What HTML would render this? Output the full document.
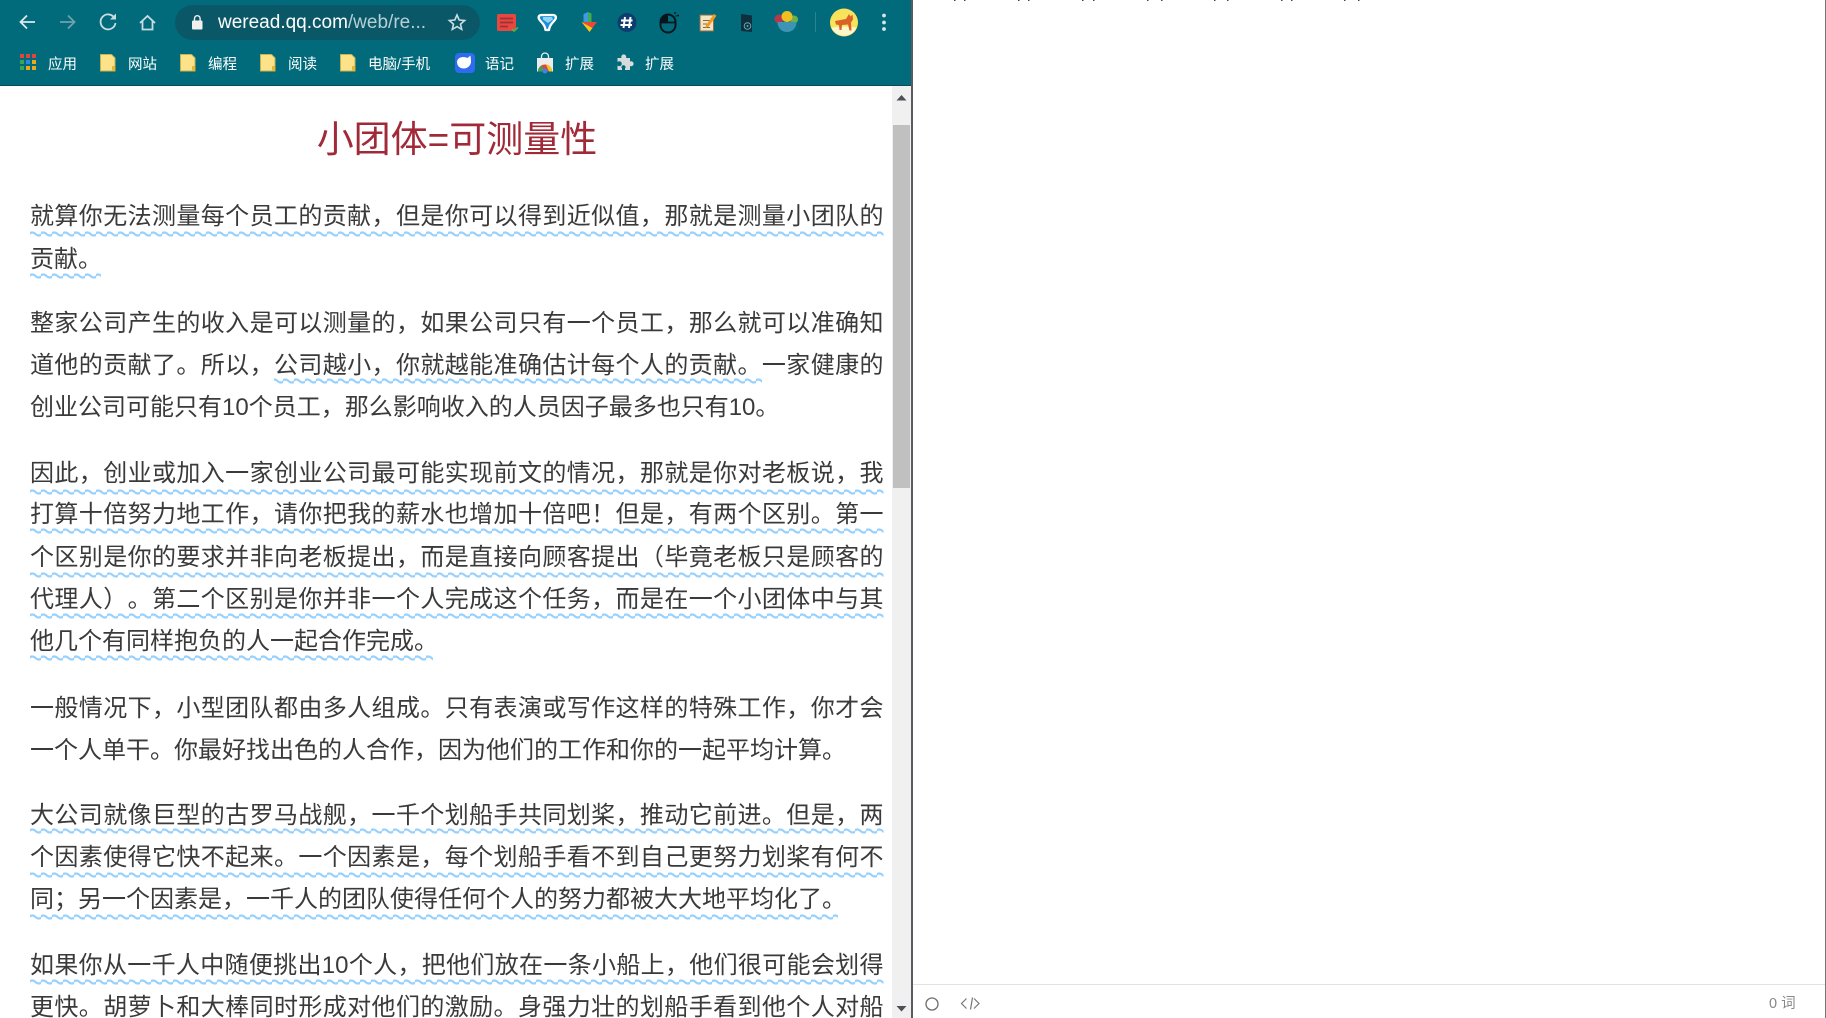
<!DOCTYPE html>
<html lang="zh"><head><meta charset="utf-8"><title>小团体=可测量性</title>
<style>
html,body{margin:0;padding:0;width:1826px;height:1018px;overflow:hidden;background:#fff}
body{position:relative;font-family:"Liberation Sans","Noto Sans CJK SC",sans-serif}
.a{position:absolute}
.l{position:absolute;left:30px;width:853.5px;height:42px;line-height:42px;font-size:24px;color:#3a3a3a;white-space:nowrap;text-spacing-trim:space-all;font-feature-settings:"chws" 0;font-family:"Liberation Sans","Noto Sans CJK SC",sans-serif}
.j{white-space:normal;text-align:justify;text-align-last:justify}
.b{position:absolute;top:53.500px;height:22px;line-height:22px;font-size:14.5px;color:#fff;white-space:nowrap}
</style></head><body>

<div class="a" style="left:0;top:0;width:911px;height:85px;background:#016b7b"></div>
<div class="a" style="left:0;top:85px;width:911px;height:1px;background:#0a4a54"></div>
<div class="a" style="left:911px;top:0;width:2px;height:1018px;background:#5a5a62"></div>
<div class="a" style="left:1825px;top:0;width:1px;height:1018px;background:#777"></div>

<!-- address pill -->
<div class="a" style="left:175px;top:5px;width:305px;height:35px;border-radius:18px;background:#0a5867"></div>
<div class="a" style="left:218px;top:10px;height:26px;line-height:26px;font-size:19px;color:#fff;white-space:nowrap">weread.qq.com<span style="color:#b5d0d6">/web/re...</span></div>

<!-- toolbar icons -->
<svg class="a" style="left:0;top:0" width="911" height="86" viewBox="0 0 911 86">
 <!-- back -->
 <path d="M35 22H21M27 15.500l-6.500 6.500 6.500 6.500" fill="none" stroke="#dce9ec" stroke-width="1.800"/>
 <!-- forward -->
 <path d="M60 22H74.500M68 15.500l6.500 6.500-6.500 6.500" fill="none" stroke="#6fa3ad" stroke-width="1.800"/>
 <!-- reload -->
 <path d="M114.500 18a7.500 7.500 0 1 0 1 5" fill="none" stroke="#c9dde1" stroke-width="1.800"/>
 <path d="M116 13.500v6h-6z" fill="#c9dde1"/>
 <!-- home -->
 <path d="M140 23l7.500-7 7.500 7M142.500 21v8.500h10V21" fill="none" stroke="#c9dde1" stroke-width="1.800"/>
 <!-- lock -->
 <rect x="192" y="20.500" width="10.500" height="9" rx="1.300" fill="#f0f0f0"/>
 <path d="M194.500 20.500v-2a2.800 2.800 0 0 1 5.600 0v2" fill="none" stroke="#f0f0f0" stroke-width="1.400"/>
 <!-- star -->
 <path d="M457 15l2.200 5 5.400.5-4.100 3.600 1.200 5.300-4.700-2.800-4.700 2.800 1.200-5.300-4.100-3.600 5.400-.5z" fill="none" stroke="#c9dde1" stroke-width="1.600"/>

 <!-- red doc -->
 <rect x="497" y="14" width="19" height="17" rx="1.500" fill="#e8473f"/>
 <path d="M500 18.500h13M500 22.500h13M500 26.500h8" stroke="#9c3138" stroke-width="1.700"/>
 <path d="M512 29l2 2 4-3.500" fill="none" stroke="#55b04a" stroke-width="1.600"/>
 <!-- diamond -->
 <path d="M542 15h11c2.500 0 3.500 2 2.500 4-1.500 3-6 5-6.500 11h-3.500c-.5-6-5-8-6.500-11-1-2 0-4 2.500-4z" fill="#1c8fd8" stroke="#fff" stroke-width="2.300" stroke-linejoin="round"/>
 <path d="M543 17h9l1 2.500-5 3.500-5-3.500z" fill="#8fd6f5"/>
 <!-- play-like -->
 <path d="M583.500 14l4.500-2v10h-4.500z" fill="#3d9be0"/>
 <path d="M588 12l3.500 1.500V22H588z" fill="#3fae50"/>
 <path d="M581.500 22h15.500l-4.500 6z" fill="#e84a3a"/>
 <path d="M581.500 22l11 6-3 4z" fill="#f5c518"/>
 <!-- hash -->
 <circle cx="627" cy="22.500" r="9.500" fill="#0c3d6e"/>
 <path d="M625 17l-1.500 11M630.500 17l-1.500 11M621 20.500h11.500M620.500 25h11.500" stroke="#fff" stroke-width="2"/>
 <!-- mouse -->
 <rect x="660.500" y="14.500" width="15" height="18" rx="7.500" fill="none" stroke="#08161c" stroke-width="1.900"/>
 <path d="M660.500 22.500h15" stroke="#08161c" stroke-width="1.800"/>
 <path d="M668 14.500a7.500 7.500 0 0 0-7.500 7.500h7.500z" fill="#08161c"/>
 <path d="M674 13h2M677 15.500h2M675.500 16h1" stroke="#08161c" stroke-width="1.500"/>
 <!-- note -->
 <rect x="700" y="15" width="13.500" height="16" fill="#f5e4c3" stroke="#8d6c46" stroke-width="1"/>
 <path d="M703 20.500h7M703 24h7M703 27.500h7" stroke="#7f6a50" stroke-width="1"/>
 <path d="M706 25l8-11 2.500 1.800-8 11-3 1z" fill="#f29a1f"/>
 <!-- dark @ -->
 <path d="M741 14l11 1.500V32l-11-1z" fill="#0f2e3e"/>
 <circle cx="747.500" cy="26" r="3.300" fill="none" stroke="#5fb0b5" stroke-width="1"/>
 <circle cx="747.500" cy="26" r="1" fill="#5fb0b5"/>
 <!-- bowl -->
 <circle cx="779" cy="19" r="4.500" fill="#b8374a"/>
 <circle cx="794" cy="19.500" r="4" fill="#6fb04a"/>
 <circle cx="787" cy="16.500" r="5.500" fill="#f0c020"/>
 <path d="M777.500 22h19c0 6-4 10-9.500 10s-9.500-4-9.500-10z" fill="#3d94b4"/>
 <!-- separator -->
 <path d="M815.500 12v20" stroke="#2c8290" stroke-width="1"/>
 <!-- avatar -->
 <circle cx="844" cy="22.500" r="14" fill="#f9e35c"/>
 <path d="M831.500 28c4-2 20-2 25 0a14 14 0 0 1-25 0z" fill="#fff7cc"/>
 <path d="M835 21l11-2 3-5 1.500 2.500 2-2 .5 5-2 3 .5 8h-2l-1.500-6-6 .5-.5 5h-2l-.5-5-3-.5z" fill="#d9622a"/>
 <!-- dots -->
 <circle cx="884" cy="15.500" r="1.900" fill="#d8e6e9"/><circle cx="884" cy="22.500" r="1.900" fill="#d8e6e9"/><circle cx="884" cy="29" r="1.900" fill="#d8e6e9"/>

 <!-- apps grid -->
 <rect x="20" y="54" width="4" height="4" fill="#e0453a"/><rect x="26" y="54" width="4" height="4" fill="#e0453a"/><rect x="32" y="54" width="4" height="4" fill="#e0453a"/>
 <rect x="20" y="60" width="4" height="4" fill="#3fa357"/><rect x="26" y="60" width="4" height="4" fill="#2e86de"/><rect x="32" y="60" width="4" height="4" fill="#e9a820"/>
 <rect x="20" y="66" width="4" height="4" fill="#3fa357"/><rect x="26" y="66" width="4" height="4" fill="#e9a820"/><rect x="32" y="66" width="4" height="4" fill="#e9a820"/>
 <!-- folders / docs -->
 <g><path d="M100.500 54.500h11l3.500 3.500v13h-14.500z" fill="#fce38a" stroke="#c9b24f" stroke-width="1"/><rect x="112" y="66" width="3" height="5" fill="#e8b830"/></g>
 <g transform="translate(80 0)"><path d="M100.500 54.500h11l3.500 3.500v13h-14.500z" fill="#fce38a" stroke="#c9b24f" stroke-width="1"/><rect x="112" y="66" width="3" height="5" fill="#e8b830"/></g>
 <g transform="translate(160 0)"><path d="M100.500 54.500h11l3.500 3.500v13h-14.500z" fill="#fce38a" stroke="#c9b24f" stroke-width="1"/><rect x="112" y="66" width="3" height="5" fill="#e8b830"/></g>
 <g transform="translate(240 0)"><path d="M100.500 54.500h11l3.500 3.500v13h-14.500z" fill="#fce38a" stroke="#c9b24f" stroke-width="1"/><rect x="112" y="66" width="3" height="5" fill="#e8b830"/></g>
 <!-- blue note icon -->
 <rect x="455" y="53" width="20" height="20" rx="4" fill="#2f6bf0"/>
 <path d="M457 62c0-3 3-5 6.500-5 1.500 0 3 .5 4 1l3-2.500.5 5c.5 4-2.500 8-7.500 8-3.500 0-6.500-2.500-6.500-6.500z" fill="#fff"/>
 <!-- web store -->
 <rect x="537" y="58" width="16" height="13.500" fill="#ececec"/>
 <path d="M541.500 58v-1.500a3.500 3.500 0 0 1 7 0V58" fill="none" stroke="#ececec" stroke-width="1.300"/>
 <path d="M538 71.500a7 7 0 0 1 14 0z" fill="#e0453a"/>
 <path d="M538 71.500a7 7 0 0 1 4-6l2 6z" fill="#3fa357"/>
 <path d="M546 64.600a7 7 0 0 1 6 6.900h-3z" fill="#f5c518"/>
 <circle cx="545" cy="71" r="2.500" fill="#3d84e6"/>
 <!-- puzzle -->
 <path d="M617.500 58h4a2.500 2.500 0 1 1 4.500 0h4v3.500a2.500 2.500 0 1 1 0 4.500v4h-5v-1.500a2 2 0 1 0-3 0V70h-4.500v-4.500a2.500 2.500 0 1 0 0-3.500z" fill="#d6dcdd"/>
</svg>

<div class="b" style="left:48px">应用</div>
<div class="b" style="left:128px">网站</div>
<div class="b" style="left:208px">编程</div>
<div class="b" style="left:288px">阅读</div>
<div class="b" style="left:368px">电脑/手机</div>
<div class="b" style="left:485px">语记</div>
<div class="b" style="left:565px">扩展</div>
<div class="b" style="left:645px">扩展</div>

<!-- scrollbar -->
<div class="a" style="left:892px;top:86px;width:19px;height:932px;background:#f0f0f1"></div>
<div class="a" style="left:893px;top:125px;width:17px;height:363px;background:#c0c0c0"></div>
<svg class="a" style="left:892px;top:86px" width="19" height="932" viewBox="0 0 19 932">
 <path d="M9.500 9l5 5.500h-10z" fill="#4f4f55"/>
 <path d="M4.500 920h10l-5 5.500z" fill="#4f4f55"/>
</svg>

<!-- title -->
<div class="a" style="left:30px;top:115px;width:854px;height:50px;line-height:50px;font-size:37px;color:#a12a38;text-align:center;white-space:nowrap">小团体=可测量性</div>

<!-- wavy underlines -->
<svg class="a" style="left:0;top:0" width="900" height="1018" viewBox="0 0 900 1018">
 <defs>
 <pattern id="wv" x="30" y="0" width="11" height="6" patternUnits="userSpaceOnUse">
  <path d="M-1 3C1 1 3.500 1 5.500 3S10 5 12 3" fill="none" stroke="#98d2fc" stroke-width="2.200"/>
 </pattern>
 <rect id="full" x="30" y="0" width="853.500" height="6" fill="url(#wv)"/>
 </defs>
 <g transform="translate(0 231)"><use href="#full"/></g>
 <g transform="translate(0 273)"><rect x="30" width="71" height="6" fill="url(#wv)"/></g>
 <g transform="translate(0 378)"><rect x="274" width="488" height="6" fill="url(#wv)"/></g>
 <g transform="translate(0 489)"><use href="#full"/></g>
 <g transform="translate(0 528)"><use href="#full"/></g>
 <g transform="translate(0 572)"><use href="#full"/></g>
 <g transform="translate(0 613)"><use href="#full"/></g>
 <g transform="translate(0 655)"><rect x="30" width="403" height="6" fill="url(#wv)"/></g>
 <g transform="translate(0 828)"><use href="#full"/></g>
 <g transform="translate(0 872)"><use href="#full"/></g>
 <g transform="translate(0 914)"><rect x="30" width="808" height="6" fill="url(#wv)"/></g>
 <g transform="translate(0 979)"><use href="#full"/></g>
</svg>

<!-- body text -->
<div class="l j" style="top:196px">就算你无法测量每个员工的贡献，但是你可以得到近似值，那就是测量小团队的</div>
<div class="l" style="top:239px">贡献。</div>

<div class="l j" style="top:303px">整家公司产生的收入是可以测量的，如果公司只有一个员工，那么就可以准确知</div>
<div class="l j" style="top:345px">道他的贡献了。所以，公司越小，你就越能准确估计每个人的贡献。一家健康的</div>
<div class="l" style="top:387px">创业公司可能只有10个员工，那么影响收入的人员因子最多也只有10。</div>

<div class="l j" style="top:453px">因此，创业或加入一家创业公司最可能实现前文的情况，那就是你对老板说，我</div>
<div class="l j" style="top:494px">打算十倍努力地工作，请你把我的薪水也增加十倍吧！但是，有两个区别。第一</div>
<div class="l j" style="top:537px">个区别是你的要求并非向老板提出，而是直接向顾客提出（毕竟老板只是顾客的</div>
<div class="l j" style="top:579px">代理人）。第二个区别是你并非一个人完成这个任务，而是在一个小团体中与其</div>
<div class="l" style="top:621px">他几个有同样抱负的人一起合作完成。</div>

<div class="l j" style="top:688px">一般情况下，小型团队都由多人组成。只有表演或写作这样的特殊工作，你才会</div>
<div class="l" style="top:730px">一个人单干。你最好找出色的人合作，因为他们的工作和你的一起平均计算。</div>

<div class="l j" style="top:795px">大公司就像巨型的古罗马战舰，一千个划船手共同划桨，推动它前进。但是，两</div>
<div class="l j" style="top:837px">个因素使得它快不起来。一个因素是，每个划船手看不到自己更努力划桨有何不</div>
<div class="l" style="top:879px">同；另一个因素是，一千人的团队使得任何个人的努力都被大大地平均化了。</div>

<div class="l j" style="top:945px">如果你从一千人中随便挑出10个人，把他们放在一条小船上，他们很可能会划得</div>
<div class="l j" style="top:987px">更快。胡萝卜和大棒同时形成对他们的激励。身强力壮的划船手看到他个人对船</div>

<!-- right pane -->
<div class="a" style="left:913px;top:984px;width:912px;height:1px;background:#e2e2e2"></div>
<svg class="a" style="left:914px;top:985px" width="80" height="33" viewBox="0 0 80 33">
 <circle cx="18" cy="19" r="6" fill="none" stroke="#6d6d6d" stroke-width="1.300"/>
 <path d="M52.500 13.500l-5 5 5 5M58.500 12.500l-2 12M60 13.500l5 5-5 5" fill="none" stroke="#777" stroke-width="1.200"/>
</svg>
<div class="a" style="left:1769px;top:994px;height:20px;line-height:20px;font-size:14.500px;color:#888;white-space:nowrap">0 词</div>

<!-- tiny clipped glyph tops at top of right pane -->
<svg class="a" style="left:914px;top:0" width="500" height="1" viewBox="0 0 500 1">
 <g fill="#444">
 <rect x="40" width="1.500" height="1"/><rect x="50" width="1.500" height="1"/>
 <rect x="104" width="1.500" height="1"/><rect x="114" width="1.500" height="1"/>
 <rect x="168" width="1.500" height="1"/><rect x="179" width="1.500" height="1"/>
 <rect x="233" width="1.500" height="1"/><rect x="247" width="1.500" height="1"/>
 <rect x="300" width="1.500" height="1"/><rect x="313" width="1.500" height="1"/>
 <rect x="367" width="1.500" height="1"/><rect x="377" width="1.500" height="1"/>
 <rect x="430" width="1.500" height="1"/><rect x="444" width="1.500" height="1"/>
 </g>
</svg>
</body></html>
